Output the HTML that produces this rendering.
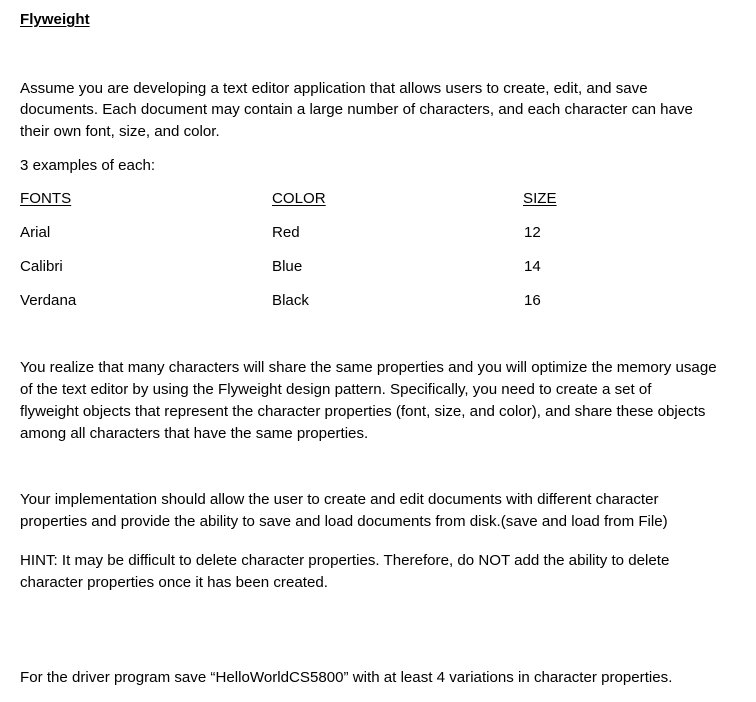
<!DOCTYPE html>
<html><head><meta charset="utf-8"><style>
html,body{margin:0;padding:0;background:#fff;}
body{width:756px;height:702px;position:relative;overflow:hidden;font-family:"Liberation Sans",Arial,sans-serif;font-size:15.1px;color:#000;}
.l{position:absolute;left:20px;height:20px;line-height:20px;white-space:nowrap;margin-top:1px;}
u{text-decoration:underline;text-underline-offset:2px;}
</style></head><body>
<div class="l" style="top:9px;font-weight:bold"><u>Flyweight</u></div>
<div class="l" style="top:78px">Assume you are developing a text editor application that allows users to create, edit, and save</div>
<div class="l" style="top:99px">documents. Each document may contain a large number of characters, and each character can have</div>
<div class="l" style="top:121px">their own font, size, and color.</div>
<div class="l" style="top:155px">3 examples of each:</div>
<div class="l" style="top:188px"><u>FONTS</u></div>
<div class="l" style="top:188px;left:272px"><u>COLOR</u></div>
<div class="l" style="top:188px;left:523px"><u>SIZE</u></div>
<div class="l" style="top:222px">Arial</div>
<div class="l" style="top:222px;left:272px">Red</div>
<div class="l" style="top:222px;left:524px">12</div>
<div class="l" style="top:256px">Calibri</div>
<div class="l" style="top:256px;left:272px">Blue</div>
<div class="l" style="top:256px;left:524px">14</div>
<div class="l" style="top:290px">Verdana</div>
<div class="l" style="top:290px;left:272px">Black</div>
<div class="l" style="top:290px;left:524px">16</div>
<div class="l" style="top:357px">You realize that many characters will share the same properties and you will optimize the memory usage</div>
<div class="l" style="top:379px">of the text editor by using the Flyweight design pattern. Specifically, you need to create a set of</div>
<div class="l" style="top:401px">flyweight objects that represent the character properties (font, size, and color), and share these objects</div>
<div class="l" style="top:423px">among all characters that have the same properties.</div>
<div class="l" style="top:489px">Your implementation should allow the user to create and edit documents with different character</div>
<div class="l" style="top:511px">properties and provide the ability to save and load documents from disk.(save and load from File)</div>
<div class="l" style="top:550px">HINT: It may be difficult to delete character properties. Therefore, do NOT add the ability to delete</div>
<div class="l" style="top:572px">character properties once it has been created.</div>
<div class="l" style="top:667px">For the driver program save “HelloWorldCS5800” with at least 4 variations in character properties.</div>
</body></html>
